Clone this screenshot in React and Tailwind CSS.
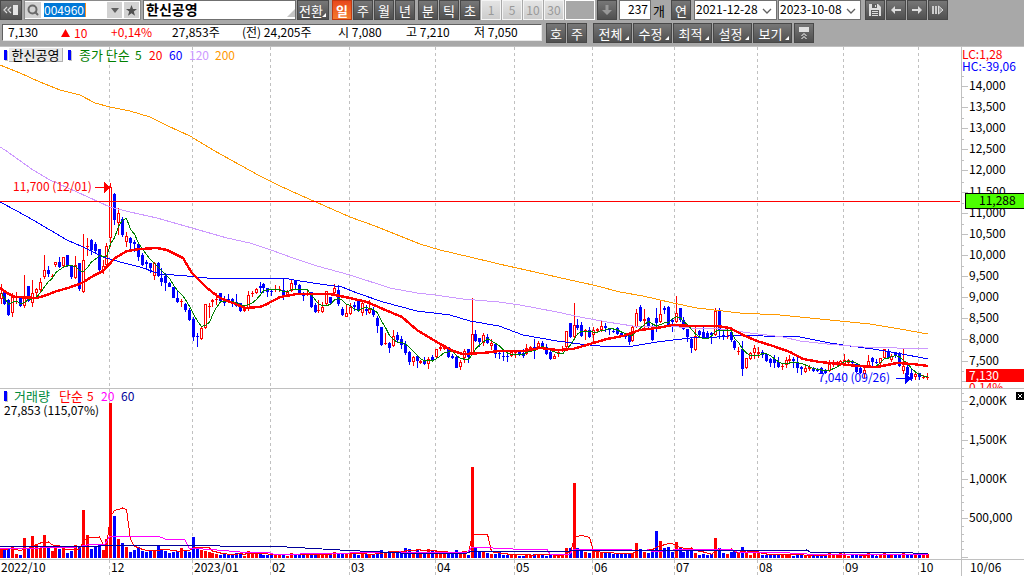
import React from "react";
import { Search, Star } from "lucide-react";

/* One entry per trading day: direction, high, body top, body bottom, low. */
const CANDLES = `
r284,293,299,304 b290,291,304,305 b299,300,315,316 r293,297,313,317 r292,297,298,304 b297,297,306,307 r275,297,306,308 b286,286,301,302
r280,293,303,307 r288,289,293,298 r278,282,290,293 r255,270,277,279 b266,270,274,277 r274,276,277,279 r262,262,265,267 b257,262,267,268
r257,257,266,267 b255,255,266,267 b266,266,277,279 r256,265,278,279 b263,263,289,291 r234,260,292,293 r238,246,247,256 b239,240,250,255
b242,244,251,254 b249,249,270,274 r260,266,270,274 r243,246,265,267 r183,187,238,247 b193,194,220,225 r208,213,223,235 b217,219,235,237
r232,236,242,247 b237,238,243,250 b240,242,244,252 b244,244,257,261 b253,255,265,266 b260,262,264,270 b263,263,268,273 r262,263,276,280
b262,263,276,277 b268,278,282,286 b273,276,283,291 b282,283,287,287 b287,287,298,298 b290,298,302,303 r299,301,302,307 b303,304,310,312
b308,310,320,321 b317,319,337,341 b333,336,337,347 r327,328,339,340 r304,304,328,329 r303,306,307,318 r299,300,302,307 r293,299,300,305
b293,293,301,303 b296,300,303,306 b294,299,302,303 b298,299,302,307 b294,302,306,307 b303,303,311,312 r308,309,311,312 r291,295,309,311
r291,293,294,297 r288,289,293,294 b282,286,288,293 b283,284,288,293 b288,288,292,297 b289,291,292,296 r285,289,290,292 r286,289,290,292
b279,290,296,300 r290,292,296,297 r280,283,291,292 b281,281,285,289 b284,285,293,295 b292,293,296,301 r289,293,295,296 b292,292,307,308
b303,305,312,313 r300,310,311,313 r302,307,312,313 r291,291,304,305 b297,297,303,305 r284,288,293,295 b285,290,304,306 b307,309,315,316
r304,313,317,317 r303,307,314,315 b302,305,307,311 b300,301,311,312 r302,303,313,316 b305,309,311,315 r300,309,313,314 b307,310,315,317
b316,318,326,333 b327,327,345,346 r333,343,344,345 b342,343,348,353 r330,336,346,347 b332,335,340,343 b336,339,345,349 b341,344,353,355
b351,352,362,365 r356,357,362,366 b355,356,361,368 r360,361,363,364 b357,361,364,365 r357,359,364,369 b355,357,360,361 r349,349,357,358
r344,347,349,351 r345,347,349,350 b347,347,357,358 b354,356,358,359 b355,357,368,368 r360,362,367,370 r349,351,358,363 b349,349,357,363
r298,334,353,353 b330,334,341,342 b338,338,342,347 r333,335,343,346 b334,337,343,344 r339,343,346,350 b343,344,354,358 b350,353,354,359
b352,356,357,361 b354,356,357,362 r350,352,356,357 r350,352,353,358 b351,352,354,356 b349,353,356,358 r344,348,354,355 r346,347,349,350
b339,347,348,359 r341,343,347,348 b341,343,347,348 b344,347,354,355 b349,352,359,360 r354,356,359,359 r351,352,354,357 r346,349,351,352
r331,331,347,348 b323,323,337,338 r303,325,337,338 b319,325,328,330 b322,325,336,337 r329,330,332,340 b327,330,337,338 r327,330,335,342
r328,329,331,333 r321,326,330,332 b323,326,328,332 b328,328,330,335 b329,331,332,333 b327,328,334,335 b331,333,336,337 b333,334,337,339
b333,334,342,345 r325,327,341,342 r309,313,327,328 b305,307,321,322 r309,319,321,329 b317,318,327,328 b324,328,340,341 b308,318,323,332
r300,314,322,323 b306,308,310,314 b306,307,325,326 b318,320,322,332 r296,313,322,323 b308,308,320,322 b317,320,329,330 b329,329,337,342
b337,339,348,353 r325,336,350,351 b330,331,335,337 b326,332,337,337 b331,333,338,339 b332,333,335,344 r308,311,335,336 b308,310,331,339
b331,335,337,340 r331,336,337,339 b331,332,340,342 b340,341,348,350 r347,351,352,355 b341,349,369,376 r358,358,368,369 r352,353,359,360
r345,348,353,359 r347,352,354,358 b350,352,355,358 b353,354,361,362 b358,359,363,367 b355,359,363,368 b357,362,367,368 r364,366,367,370
r357,360,365,368 r355,359,361,364 b357,359,361,368 b357,362,368,373 b366,367,369,375 r366,368,372,373 r365,367,369,371 b367,368,371,372
b368,369,371,372 b367,368,373,373 b369,370,373,374 r360,364,371,372 r360,362,365,367 r361,362,364,367 r360,361,365,366 r354,360,364,365
r359,360,363,366 b360,361,363,366 b364,364,372,373 b367,368,373,374 r367,370,374,378 r355,361,367,368 b357,358,362,366 b359,362,363,364
r358,358,363,366 r349,349,358,359 b349,351,358,359 r354,356,360,362 b352,353,356,358 b352,353,366,367 r348,366,371,374 b364,367,375,378
b369,373,379,381 r373,374,377,380 b373,373,377,380 r375,377,378,379 r373,377,378,380
`
  .trim()
  .split(/\s+/)
  .map((item) => {
    const [high, top, bottom, low] = item.slice(1).split(",").map(Number);
    return { up: item[0] === "r", high, top, bottom, low };
  });

const VOLUMES = [
  9, 8, 10, 11, 4, 3, 20, 9, 22, 14, 10, 23, 11, 7, 11, 9, 9, 5, 7, 13, 11, 48, 23, 9, 11, 14, 8, 19, 155, 42, 19, 15,
  11, 6, 8, 11, 7, 6, 7, 7, 12, 9, 7, 5, 6, 7, 10, 8, 6, 21, 9, 8, 7, 6, 5, 4, 3, 4, 3, 4, 5, 5, 2, 7,
  5, 5, 4, 3, 3, 4, 4, 3, 3, 2, 5, 3, 3, 4, 3, 4, 3, 5, 4, 3, 4, 6, 5, 4, 5, 4, 4, 3, 5, 4, 3, 4,
  5, 8, 6, 7, 6, 5, 7, 10, 9, 6, 9, 6, 6, 9, 7, 7, 5, 5, 5, 5, 8, 6, 7, 3, 91, 10, 7, 6, 5, 4, 4, 6,
  3, 3, 4, 4, 2, 2, 4, 3, 4, 3, 4, 2, 3, 3, 3, 3, 10, 10, 75, 10, 7, 6, 5, 7, 6, 5, 5, 5, 4, 4, 5, 4,
  5, 5, 15, 9, 6, 5, 7, 27, 17, 10, 11, 6, 16, 10, 6, 9, 9, 5, 3, 4, 3, 4, 20, 10, 5, 4, 6, 7, 6, 11, 5, 3,
  6, 5, 3, 3, 3, 4, 3, 3, 4, 3, 2, 4, 3, 2, 3, 3, 2, 3, 3, 5, 3, 3, 5, 4, 2, 3, 3, 2, 3, 5, 3, 2,
  3, 5, 4, 3, 3, 3, 6, 4, 3, 3, 4, 4, 4,
];

const column = (i) => Math.floor(1 + 3.925 * i);

function average(values, span) {
  return values.map((_, i) => {
    const part = values.slice(Math.max(0, i - span + 1), i + 1);
    return part.reduce((sum, v) => sum + v, 0) / part.length;
  });
}

const closes = CANDLES.map((c) => (c.up ? c.top : c.bottom));
const priceMa5 = average(closes, 5).map((y, i) => `${column(i) + 0.5},${y}`).join(" ");
const volumeMa5 = average(VOLUMES, 5).map((v, i) => `${column(i) + 0.5},${558 - v}`).join(" ");

const PRICE_MA20 =
  "0,288 7,293 15,297 37,298 47,295 57,291 68,288 82,283 93,276 103,271 115,258 127,251 140,249 157,248 167,250 183,258 192,273 207,288 220,298 233,303 245,308 260,307 267,304 280,297 297,294 330,294 350,298 367,302 383,309 402,317 417,330 435,341 453,351 463,354 483,353 499,351 523,351 540,348 557,350 573,349 590,344 607,339 623,336 640,330 657,328 673,325 693,326 717,326 730,328 743,335 757,341 773,346 790,352 803,359 820,362 840,364 857,366 877,367 897,363 913,364 928,366";
const PRICE_MA60 =
  "0,202 17,211 33,220 50,230 67,240 83,247 103,257 120,262 140,267 160,274 187,276 207,278 237,279 260,278 283,278 300,281 320,284 342,287 357,293 383,302 417,311 450,315 470,321 499,326 523,335 557,341 580,344 600,346 633,346 657,342 690,338 717,337 740,335 763,336 800,337 830,343 850,346 873,349 897,353 928,359";
const PRICE_MA120 =
  "0,147 5,150 33,170 50,180 77,192 110,207 130,212 157,218 192,228 227,238 250,243 271,250 293,258 317,266 350,275 390,288 417,293 435,295 463,299 499,302 520,305 557,312 580,317 607,322 633,326 667,326 690,328 720,329 750,333 783,337 800,341 827,344 863,347 897,348 928,349";
const PRICE_MA200 =
  "0,65 20,73 40,82 60,90 80,95 95,103 110,107 130,111 150,117 168,126 190,136 213,150 240,165 260,176 280,186 300,195 325,206 350,217 375,226 400,236 420,244 440,250 470,257 499,264 535,272 570,280 593,285 620,292 643,296 673,303 697,308 740,313 780,315 820,319 870,324 900,329 928,334";
const VOLUME_MA20 =
  "0,549 40,548 77,547 87,545 105,544 110,536 158,536 165,539 185,540 189,548 217,550 240,552 270,553 273,554 300,554 400,552 467,553 472,547 513,549 547,549 550,554 570,554 573,550 633,549 647,549 653,552 673,550 720,549 733,550 737,552 790,553 807,554 928,554";
const VOLUME_MA60 =
  "0,546 100,546 110,545 217,545 220,546 267,546 287,547 340,550 400,553 467,553 472,551 570,551 573,550 705,550 707,551 807,550 810,552 890,552 913,553 928,554";

const MONTHS = [
  { x: 109, label: "12" },
  { x: 192, label: "2023/01" },
  { x: 270, label: "02" },
  { x: 349, label: "03" },
  { x: 435, label: "04" },
  { x: 514, label: "05" },
  { x: 592, label: "06" },
  { x: 674, label: "07" },
  { x: 757, label: "08" },
  { x: 843, label: "09" },
  { x: 918, label: "10" },
];

const PRICE_LABELS = [
  "14,000", "13,500", "13,000", "12,500", "12,000", "11,500", "11,000",
  "10,500", "10,000", "9,500", "9,000", "8,500", "8,000", "7,500",
];
const VOLUME_LABELS = ["2,000K", "1,500K", "1,000K", "500,000"];

const MonthLines = ({ top, bottom }) =>
  MONTHS.map((m) => (
    <line key={m.x} x1={m.x + 0.5} x2={m.x + 0.5} y1={top} y2={bottom} stroke="#c0c0c0" strokeDasharray="3 3" />
  ));

function PricePlot() {
  return (
    <svg
      className="block h-[341px] w-full"
      viewBox="0 47 961 341"
      preserveAspectRatio="none"
      shapeRendering="crispEdges"
      role="img"
      aria-label="한신공영 일봉"
    >
      <MonthLines top={47} bottom={388} />
      {CANDLES.map((c, i) => {
        const x = column(i);
        const color = c.up ? "#ff0000" : "#0000ff";
        const height = Math.max(1, c.bottom - c.top);
        return (
          <g key={i} fill={color}>
            <rect x={x} y={c.high} width={1} height={c.low - c.high} />
            <rect x={x - 1} y={c.top} width={3} height={height} />
            {c.up && height > 2 && <rect x={x} y={c.top + 1} width={1} height={height - 2} fill="#ffffff" />}
          </g>
        );
      })}
      <g fill="none">
        <polyline points={PRICE_MA200} stroke="#ff9900" />
        <polyline points={PRICE_MA60} stroke="#0000ff" />
        <polyline points={PRICE_MA120} stroke="#cc99ff" />
        <polyline points={priceMa5} stroke="#008000" />
        <polyline points={PRICE_MA20} stroke="#ff0000" strokeWidth={2.4} strokeLinejoin="round" />
      </g>
      <rect x={0} y={201} width={960} height={1} fill="#ff0000" />
      <path d="M95 187h9v-5l7 5.5-7 5.5v-5h-9z" fill="#ff0000" />
      <path d="M896 378h9v-5l7 5.5-7 5.5v-5h-9z" fill="#0000ff" />
    </svg>
  );
}

function PriceAxis() {
  return (
    <svg className="block h-[341px] w-full" viewBox="961 47 63 341" preserveAspectRatio="xMinYMin slice">
      <g shapeRendering="crispEdges" fill="#c0c0c0">
        <rect x={961} y={47} width={1} height={341} />
        {PRICE_LABELS.map((label, i) => (
          <g key={label}>
            <rect x={961} y={Math.round(76 + 21.12 * i)} width={3} height={1} />
            <rect x={961} y={Math.round(86 + 21.12 * i)} width={7} height={1} />
          </g>
        ))}
        <rect x={961} y={371} width={3} height={1} />
        <rect x={961} y={381} width={7} height={1} />
      </g>
      <g className="text-[12px]">
        <text x={962} y={59} fill="#ff0000">LC:1,28</text>
        <text x={962} y={71} fill="#0000ff">HC:-39,06</text>
        {PRICE_LABELS.map((label, i) => (
          <text key={label} x={969} y={Math.round(90 + 21.12 * i)}>{label}</text>
        ))}
        <rect x={965} y={193} width={60} height={15} fill="#4cff00" stroke="#000000" shapeRendering="crispEdges" />
        <text x={979} y={205}>11,288</text>
        <text x={969} y={392} fill="#ff0000">0,14%</text>
        <rect x={966} y={369} width={58} height={13} fill="#ff0000" />
        <text x={969} y={380} fill="#ffffff">7,130</text>
      </g>
    </svg>
  );
}

function VolumePlot() {
  return (
    <svg
      className="block h-[170px] w-full"
      viewBox="0 389 961 170"
      preserveAspectRatio="none"
      shapeRendering="crispEdges"
      role="img"
      aria-label="거래량"
    >
      <MonthLines top={389} bottom={559} />
      {VOLUMES.map((v, i) => (
        <rect
          key={i}
          x={column(i) - 1}
          y={558 - v}
          width={3}
          height={v}
          fill={CANDLES[i] && !CANDLES[i].up ? "#0000ff" : "#ff0000"}
        />
      ))}
      <g fill="none">
        <polyline points={volumeMa5} stroke="#ff0000" />
        <polyline points={VOLUME_MA20} stroke="#ff00ff" />
        <polyline points={VOLUME_MA60} stroke="#000099" />
      </g>
    </svg>
  );
}

function VolumeAxis() {
  return (
    <svg className="block h-[170px] w-full" viewBox="961 389 63 170" preserveAspectRatio="xMinYMin slice">
      <g shapeRendering="crispEdges" fill="#c0c0c0">
        <rect x={961} y={389} width={1} height={170} />
        {Array.from({ length: 22 }, (_, i) => (
          <rect key={i} x={961} y={Math.round(557 - 7.8 * i)} width={3} height={1} />
        ))}
        {[401, 440, 479, 518, 557].map((y) => (
          <rect key={y} x={961} y={y} width={7} height={1} />
        ))}
      </g>
      <g className="text-[12px]">
        {VOLUME_LABELS.map((label, i) => (
          <text key={label} x={969} y={405 + 39 * i}>{label}</text>
        ))}
      </g>
    </svg>
  );
}

const DARK =
  "relative flex h-5 shrink-0 items-center justify-center border border-[#484848] bg-linear-to-b from-[#777777] to-[#505050] text-[13px] leading-none text-white";

function Corner() {
  return (
    <svg className="absolute right-0.5 bottom-0.5 size-1" viewBox="0 0 4 4" aria-hidden="true">
      <path d="M4 0v4H0z" fill="#ffffff" />
    </svg>
  );
}

function ToolButton({ children, corner = false, wide = false, label }) {
  return (
    <button type="button" aria-label={label} className={`${DARK} ${wide ? "w-[39px] pr-1" : "w-5"}`}>
      {children}
      {corner && <Corner />}
    </button>
  );
}

const MinuteButton = ({ children }) => (
  <button
    type="button"
    className="h-5 w-5 shrink-0 border border-[#f4f4f4] bg-linear-to-b from-[#e4e4e4] to-[#cccccc] text-[12px] leading-none text-[#999999]"
  >
    {children}
  </button>
);

const DateSelect = ({ value, label }) => (
  <div className="relative h-5 w-[83px] shrink-0 border border-[#707070] bg-white">
    <select
      aria-label={label}
      defaultValue={value}
      className="block h-4 w-full appearance-none bg-white pl-px text-[12px] leading-4 outline-none"
    >
      <option>{value}</option>
    </select>
    <svg className="pointer-events-none absolute top-1.5 right-1 h-2 w-2.5" viewBox="0 0 10 8" fill="none" stroke="#606060" aria-hidden="true">
      <path d="M1 2l4 4 4-4" strokeWidth="1.3" />
    </svg>
  </div>
);

function TopRow() {
  return (
    <div className="flex h-5 items-center">
      <button type="button" aria-label="목록" className={`${DARK} w-[22px]`}>
        <svg width="16" height="12" viewBox="0 0 16 12" aria-hidden="true">
          <path d="M4 3L1 6l3 3M8 3L5 6l3 3" fill="none" stroke="#dddddd" strokeWidth="1.2" />
          <rect x="10" y="1" width="5" height="10" fill="#e4e4e4" />
        </svg>
      </button>
      <div className="ml-0.5 flex h-5 w-[117px] shrink-0 items-center border border-[#8a8a8a] bg-white">
        <span className="flex h-4 w-4 items-center justify-center bg-[#d2d2d2]">
          <Search size={12} strokeWidth={4} className="text-[#6a6a6a]" />
        </span>
        <label htmlFor="code" className="sr-only">종목코드</label>
        <div className="flex min-w-0 flex-1 pl-[3px]">
          <input
            id="code"
            defaultValue="004960"
            className="h-3.5 w-[42px] border-r border-[#ff8c1a] bg-[#0078d7] text-[12px] leading-3.5 text-white outline-none"
          />
        </div>
        <button type="button" aria-label="종목 목록" className="mr-0.5 flex h-4 w-[15px] items-center justify-center bg-[#d2d2d2]">
          <svg width="8" height="5" viewBox="0 0 8 5" aria-hidden="true"><path d="M0 0h8L4 5z" fill="#606060" /></svg>
        </button>
        <button type="button" aria-label="관심종목" className="mr-px flex h-4 w-[15px] items-center justify-center bg-[#d2d2d2] text-[#555555]">
          <svg width="11" height="11" viewBox="0 0 11 11" aria-hidden="true">
            <path d="M5.5 0L7 4h4L7.800 6.500 9 10.800 5.500 8.200 2 10.800 3.200 6.500 0 4h4z" fill="#505050" />
          </svg>
        </button>
      </div>
      <div className="relative ml-0.5 h-5 w-[153px] shrink-0 border border-[#707070] bg-white">
        <input
          aria-label="종목명"
          defaultValue="한신공영"
          className="block h-4 w-full bg-transparent pl-0.5 text-[14px] leading-4 font-bold outline-none"
        />
        <svg className="absolute right-0 bottom-0.5 size-2" viewBox="0 0 8 8" aria-hidden="true"><path d="M8 0v8H0z" fill="#c4c4c4" /></svg>
      </div>
      <button type="button" className={`${DARK} ml-px w-8 pr-1`}>
        전환
        <Corner />
      </button>
      <div className="ml-[3px] flex gap-px">
        <button type="button" className="h-5 w-5 shrink-0 border border-[#c03a10] bg-linear-to-b from-[#e8481c] to-[#f47a2c] text-[13px] leading-none font-bold text-white">
          일
        </button>
        <ToolButton>주</ToolButton>
        <ToolButton>월</ToolButton>
        <ToolButton>년</ToolButton>
      </div>
      <div className="ml-[3px] flex gap-px">
        <ToolButton>분</ToolButton>
        <ToolButton>틱</ToolButton>
        <ToolButton>초</ToolButton>
        <MinuteButton>1</MinuteButton>
        <MinuteButton>5</MinuteButton>
        <MinuteButton>10</MinuteButton>
        <MinuteButton>30</MinuteButton>
      </div>
      <input aria-label="분 간격" disabled className="ml-px h-5 w-[30px] shrink-0 border border-white bg-[#a8a8a8]" />
      <div className="ml-0.5 flex">
        <ToolButton label="적용">
          <svg width="12" height="12" viewBox="0 0 12 12" aria-hidden="true"><path d="M4.500 1h3v5H11l-5 5-5-5h3.500z" fill="#989898" /></svg>
        </ToolButton>
      </div>
      <div className="ml-0.5 h-5 w-8 shrink-0 border border-[#707070] bg-white">
        <input
          id="count"
          defaultValue="237"
          className="block h-4 w-full bg-transparent pr-0.5 text-right text-[12px] leading-4 outline-none"
        />
      </div>
      <label htmlFor="count" className="ml-0.5 w-[18px] shrink-0 text-[13px] leading-none">개</label>
      <div className="flex"><ToolButton>연</ToolButton></div>
      <div className="ml-[3px] flex gap-px">
        <DateSelect value="2021-12-28" label="시작일" />
        <DateSelect value="2023-10-08" label="종료일" />
      </div>
      <div className="ml-1 flex gap-px">
        <ToolButton label="저장">
          <svg width="12" height="12" viewBox="0 0 12 12" aria-hidden="true">
            <path d="M0 0h9l3 3v9H0z" fill="#dddddd" />
            <path d="M3 0h5v4H3zM2 6h8v6H2z" fill="#5e5e5e" />
            <path d="M6 1h1v2H6zM3 7h6v1H3zM3 9h6v1H3zM3 11h6v1H3z" fill="#dddddd" />
          </svg>
        </ToolButton>
        <ToolButton label="이전">
          <svg width="12" height="10" viewBox="0 0 12 10" aria-hidden="true"><path d="M11 4H5V1L1 5l4 4V6h6z" fill="#dddddd" /></svg>
        </ToolButton>
        <ToolButton label="다음">
          <svg width="12" height="10" viewBox="0 0 12 10" aria-hidden="true"><path d="M1 4h6V1l4 4-4 4V6H1z" fill="#dddddd" /></svg>
        </ToolButton>
        <ToolButton label="끝으로">
          <svg width="12" height="10" viewBox="0 0 12 10" aria-hidden="true">
            <path d="M0 1h2v8H0zM3 1h2v8H3z" fill="#cccccc" />
            <path d="M6.500 1L11 5 6.500 9z" fill="#999999" stroke="#dddddd" />
          </svg>
        </ToolButton>
      </div>
    </div>
  );
}

function QuoteRow() {
  return (
    <div className="mt-[3px] flex h-5 items-start">
      <div className="mt-px ml-0.5 flex h-[17px] w-[540px] shrink-0 border border-t-[#606060] border-r-[#e8e8e8] border-b-[#e8e8e8] border-l-[#606060] bg-white pl-[5px] text-[12px] leading-[14px] whitespace-nowrap">
        <span className="w-[53px]">7,130</span>
        <span className="flex w-[50px] items-center gap-1 text-[#ff0000]">
          <svg width="9" height="8" viewBox="0 0 9 8" aria-hidden="true"><path d="M4.500 0L9 8H0z" fill="#ff0000" /></svg>
          10
        </span>
        <span className="w-[61px] text-[#ff0000]">+0,14%</span>
        <span className="w-[70px]">27,853주</span>
        <span className="w-24">(전) 24,205주</span>
        <span className="w-[68px]">시 7,080</span>
        <span className="w-[68px]">고 7,210</span>
        <span>저 7,050</span>
      </div>
      <div className="ml-1 flex gap-px">
        <ToolButton>호</ToolButton>
        <ToolButton>주</ToolButton>
      </div>
      <div className="ml-1.5 flex gap-px">
        <ToolButton wide corner>전체</ToolButton>
        <ToolButton wide corner>수정</ToolButton>
        <ToolButton wide corner>최적</ToolButton>
        <ToolButton wide corner>설정</ToolButton>
        <ToolButton wide corner>보기</ToolButton>
      </div>
      <div className="ml-0.5 flex">
        <ToolButton label="접기">
          <svg width="10" height="12" viewBox="0 0 10 12" aria-hidden="true">
            <rect x="0" y="0" width="10" height="5" fill="#e0e0e0" />
            <path d="M2.500 9L5 6.500 7.500 9M2.500 12L5 9.500 7.500 12" fill="none" stroke="#ffffff" />
          </svg>
        </ToolButton>
      </div>
    </div>
  );
}

const Marker = () => <span className="h-2.5 w-[3px] shrink-0 bg-[#0000ff] shadow-[1px_1px_0_#c0c0c0]" />;

export default function App() {
  return (
    <div className="w-full min-w-[960px] overflow-hidden bg-white font-['Noto_Sans_CJK_KR',sans-serif] text-black">
      <header className="h-[46px] bg-[#a8a8a8]">
        <TopRow />
        <QuoteRow />
      </header>
      <main>
        <section className="relative grid grid-cols-[minmax(0,1fr)_63px] border-t border-[#c0c0c0]">
          <PricePlot />
          <PriceAxis />
          <div className="absolute top-0 left-1 flex h-4 items-center text-[12px] leading-4 whitespace-nowrap">
            <Marker />
            <span className="ml-0.5 flex h-3.5 w-[54px] items-center justify-center border-r border-b border-[#b0b0b0] bg-[#e8e8e8] text-[13px]">한신공영</span>
            <span className="ml-[5px] flex"><Marker /></span>
            <span className="ml-2 w-14 text-[13px] text-[#008000]">종가 단순</span>
            <span className="w-3.5 text-[#008000]">5</span>
            <span className="w-5 text-[#ff0000]">20</span>
            <span className="w-5 text-[#0000ff]">60</span>
            <span className="w-[26px] text-[#cc99ff]">120</span>
            <span className="text-[#ff9900]">200</span>
          </div>
          <span className="absolute top-[132px] left-[13px] text-[12px] leading-[14px] text-[#ff0000]">11,700 (12/01)</span>
          <span className="absolute top-[323px] right-[134px] text-[12px] leading-[14px] text-[#0000ff]">7,040 (09/26)</span>
        </section>
        <section className="relative grid grid-cols-[minmax(0,1fr)_63px] border-y border-[#c0c0c0]">
          <VolumePlot />
          <VolumeAxis />
          <div className="absolute top-0 left-1 text-[12px] leading-[14px] whitespace-nowrap">
            <div className="flex h-[14px] items-center">
              <Marker />
              <span className="ml-[7px] w-[45px] text-[13px] text-[#008a3c]">거래량</span>
              <span className="w-7 text-[13px] text-[#ff0000]">단순</span>
              <span className="w-3.5 text-[#ff0000]">5</span>
              <span className="w-5 text-[#ff00ff]">20</span>
              <span className="text-[#000099]">60</span>
            </div>
            <div>27,853 (115,07%)</div>
          </div>
          <button type="button" aria-label="닫기" className="absolute top-[3px] right-0 size-2 bg-black">
            <svg className="block size-2" viewBox="0 0 8 8" aria-hidden="true"><path d="M2 2l4 4M6 2L2 6" stroke="#ffffff" /></svg>
          </button>
        </section>
        <section className="grid grid-cols-[minmax(0,1fr)_63px]">
          <svg className="block h-4 w-full" viewBox="0 560 961 16" preserveAspectRatio="none">
            <g shapeRendering="crispEdges"><MonthLines top={560} bottom={576} /></g>
            <g className="text-[12px]">
              <text x={1} y={572}>2022/10</text>
              {MONTHS.map((m) => (
                <text key={m.x} x={m.x + 2} y={572}>{m.label}</text>
              ))}
            </g>
          </svg>
          <div className="h-4 border-l border-[#c0c0c0] pl-2 text-[12px] leading-[14px]">10/06</div>
        </section>
      </main>
    </div>
  );
}
